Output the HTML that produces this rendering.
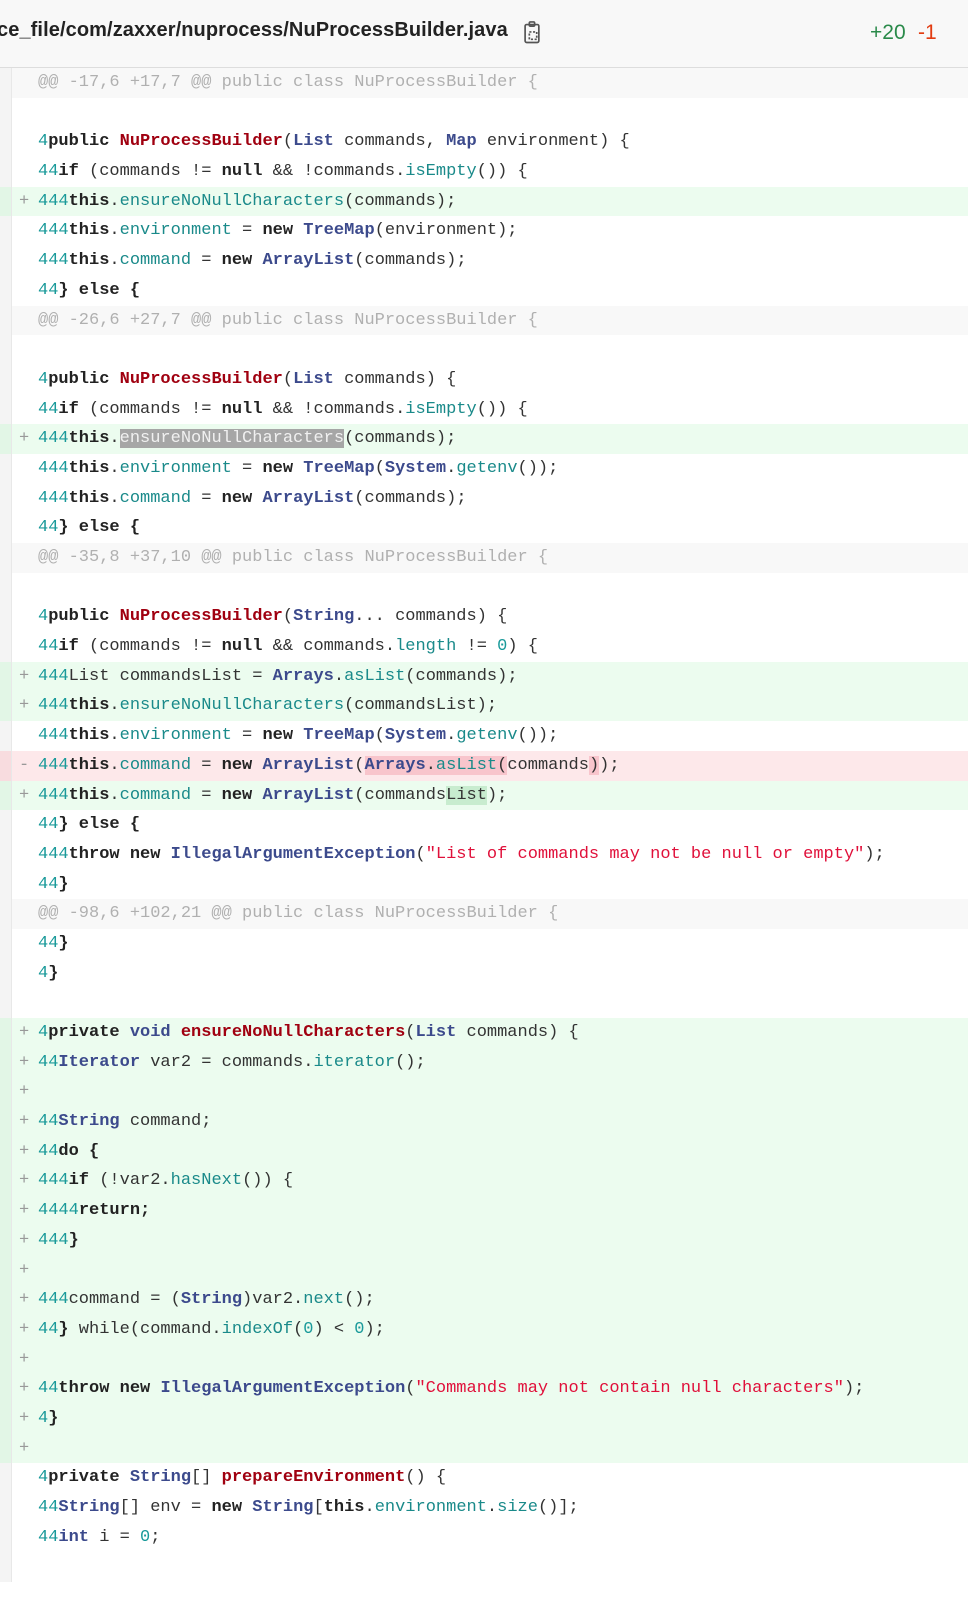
<!DOCTYPE html>
<html><head><meta charset="utf-8"><style>
body{margin:0;width:968px;height:1597px;overflow:hidden;background:#fff;font-family:"Liberation Mono",monospace;}
.hd{height:67px;background:#f8f8f8;border-bottom:1px solid #ddd;position:relative;}
.title{position:absolute;left:-3px;top:19px;font:bold 20px "Liberation Sans",sans-serif;color:#222;letter-spacing:0.1px;}
.clip{position:absolute;left:523px;top:20px;}
.add{position:absolute;left:870px;top:21px;font:21px "Liberation Sans",sans-serif;color:#2a8a4a;}
.del{position:absolute;left:918px;top:21px;font:21px "Liberation Sans",sans-serif;color:#e23b10;}
.rows{position:absolute;top:68px;left:0;width:968px;}
.r{height:29.69px;line-height:29.69px;font-size:17px;white-space:pre;color:#333;position:relative;padding-left:38px;box-sizing:border-box;}
.r::before{content:"";position:absolute;left:0;top:0;bottom:0;width:11px;background:#f4f4f4;border-right:1px solid #e8e8e8;}
.h{background:#f8f8f8;color:#b0b0b0;}
.a{background:#ecfcef;}
.a::before{background:#e2f6e6;}
.d{background:#fde8ea;}
.d::before{background:#f8dcdf;}
.m{position:absolute;left:19px;color:#999;}
.i{color:#1a9a9a;}
.k{font-weight:bold;color:#222;}
.t{font-weight:bold;color:#3c4a8c;}
.f{color:#1a8a8a;}
.n{font-weight:bold;color:#a00010;}
.s{color:#e0103a;}
.sel{background:#a6a6a6;color:#f0f0f0;}
.dh{background:#f8c5cc;}
.ah{background:#c8eccf;}
</style></head><body>
<div class="hd"><div class="title">ce_file/com/zaxxer/nuprocess/NuProcessBuilder.java</div>
<svg class="clip" width="19" height="26" viewBox="0 0 18 24" fill="none" stroke="#555" stroke-width="1.6"><rect x="2" y="4" width="13" height="17" rx="1.5"/><rect x="6" y="1.5" width="5" height="4" rx="1"/><rect x="6" y="11" width="7" height="7" stroke-dasharray="2 1.5"/></svg>
<div class="add">+20</div><div class="del">-1</div></div>
<div class="rows">
<div class="r h">@@ -17,6 +17,7 @@ public class NuProcessBuilder {</div>
<div class="r"> </div>
<div class="r"><span class="i">4</span><span class="k">public</span> <span class="n">NuProcessBuilder</span>(<span class="t">List</span> commands, <span class="t">Map</span> environment) {</div>
<div class="r"><span class="i">44</span><span class="k">if</span> (commands != <span class="k">null</span> &amp;&amp; !commands.<span class="f">isEmpty</span>()) {</div>
<div class="r a"><span class="m">+</span><span class="i">444</span><span class="k">this</span>.<span class="f">ensureNoNullCharacters</span>(commands);</div>
<div class="r"><span class="i">444</span><span class="k">this</span>.<span class="f">environment</span> = <span class="k">new</span> <span class="t">TreeMap</span>(environment);</div>
<div class="r"><span class="i">444</span><span class="k">this</span>.<span class="f">command</span> = <span class="k">new</span> <span class="t">ArrayList</span>(commands);</div>
<div class="r"><span class="i">44</span><span class="k">} else {</span></div>
<div class="r h">@@ -26,6 +27,7 @@ public class NuProcessBuilder {</div>
<div class="r"> </div>
<div class="r"><span class="i">4</span><span class="k">public</span> <span class="n">NuProcessBuilder</span>(<span class="t">List</span> commands) {</div>
<div class="r"><span class="i">44</span><span class="k">if</span> (commands != <span class="k">null</span> &amp;&amp; !commands.<span class="f">isEmpty</span>()) {</div>
<div class="r a"><span class="m">+</span><span class="i">444</span><span class="k">this</span>.<span class="sel">ensureNoNullCharacters</span>(commands);</div>
<div class="r"><span class="i">444</span><span class="k">this</span>.<span class="f">environment</span> = <span class="k">new</span> <span class="t">TreeMap</span>(<span class="t">System</span>.<span class="f">getenv</span>());</div>
<div class="r"><span class="i">444</span><span class="k">this</span>.<span class="f">command</span> = <span class="k">new</span> <span class="t">ArrayList</span>(commands);</div>
<div class="r"><span class="i">44</span><span class="k">} else {</span></div>
<div class="r h">@@ -35,8 +37,10 @@ public class NuProcessBuilder {</div>
<div class="r"> </div>
<div class="r"><span class="i">4</span><span class="k">public</span> <span class="n">NuProcessBuilder</span>(<span class="t">String</span>... commands) {</div>
<div class="r"><span class="i">44</span><span class="k">if</span> (commands != <span class="k">null</span> &amp;&amp; commands.<span class="f">length</span> != <span class="i">0</span>) {</div>
<div class="r a"><span class="m">+</span><span class="i">444</span>List commandsList = <span class="t">Arrays</span>.<span class="f">asList</span>(commands);</div>
<div class="r a"><span class="m">+</span><span class="i">444</span><span class="k">this</span>.<span class="f">ensureNoNullCharacters</span>(commandsList);</div>
<div class="r"><span class="i">444</span><span class="k">this</span>.<span class="f">environment</span> = <span class="k">new</span> <span class="t">TreeMap</span>(<span class="t">System</span>.<span class="f">getenv</span>());</div>
<div class="r d"><span class="m">-</span><span class="i">444</span><span class="k">this</span>.<span class="f">command</span> = <span class="k">new</span> <span class="t">ArrayList</span>(<span class="dh"><span class="t">Arrays</span>.<span class="f">asList</span>(</span>commands<span class="dh">)</span>);</div>
<div class="r a"><span class="m">+</span><span class="i">444</span><span class="k">this</span>.<span class="f">command</span> = <span class="k">new</span> <span class="t">ArrayList</span>(commands<span class="ah">List</span>);</div>
<div class="r"><span class="i">44</span><span class="k">} else {</span></div>
<div class="r"><span class="i">444</span><span class="k">throw new</span> <span class="t">IllegalArgumentException</span>(<span class="s">"List of commands may not be null or empty"</span>);</div>
<div class="r"><span class="i">44</span><span class="k">}</span></div>
<div class="r h">@@ -98,6 +102,21 @@ public class NuProcessBuilder {</div>
<div class="r"><span class="i">44</span><span class="k">}</span></div>
<div class="r"><span class="i">4</span><span class="k">}</span></div>
<div class="r"> </div>
<div class="r a"><span class="m">+</span><span class="i">4</span><span class="k">private</span> <span class="t">void</span> <span class="n">ensureNoNullCharacters</span>(<span class="t">List</span> commands) {</div>
<div class="r a"><span class="m">+</span><span class="i">44</span><span class="t">Iterator</span> var2 = commands.<span class="f">iterator</span>();</div>
<div class="r a"><span class="m">+</span> </div>
<div class="r a"><span class="m">+</span><span class="i">44</span><span class="t">String</span> command;</div>
<div class="r a"><span class="m">+</span><span class="i">44</span><span class="k">do {</span></div>
<div class="r a"><span class="m">+</span><span class="i">444</span><span class="k">if</span> (!var2.<span class="f">hasNext</span>()) {</div>
<div class="r a"><span class="m">+</span><span class="i">4444</span><span class="k">return;</span></div>
<div class="r a"><span class="m">+</span><span class="i">444</span><span class="k">}</span></div>
<div class="r a"><span class="m">+</span> </div>
<div class="r a"><span class="m">+</span><span class="i">444</span>command = (<span class="t">String</span>)var2.<span class="f">next</span>();</div>
<div class="r a"><span class="m">+</span><span class="i">44</span><span class="k">}</span> while(command.<span class="f">indexOf</span>(<span class="i">0</span>) &lt; <span class="i">0</span>);</div>
<div class="r a"><span class="m">+</span> </div>
<div class="r a"><span class="m">+</span><span class="i">44</span><span class="k">throw new</span> <span class="t">IllegalArgumentException</span>(<span class="s">"Commands may not contain null characters"</span>);</div>
<div class="r a"><span class="m">+</span><span class="i">4</span><span class="k">}</span></div>
<div class="r a"><span class="m">+</span> </div>
<div class="r"><span class="i">4</span><span class="k">private</span> <span class="t">String</span>[] <span class="n">prepareEnvironment</span>() {</div>
<div class="r"><span class="i">44</span><span class="t">String</span>[] env = <span class="k">new</span> <span class="t">String</span>[<span class="k">this</span>.<span class="f">environment</span>.<span class="f">size</span>()];</div>
<div class="r"><span class="i">44</span><span class="t">int</span> i = <span class="i">0</span>;</div>
<div class="r"> </div>
</div>
</body></html>
